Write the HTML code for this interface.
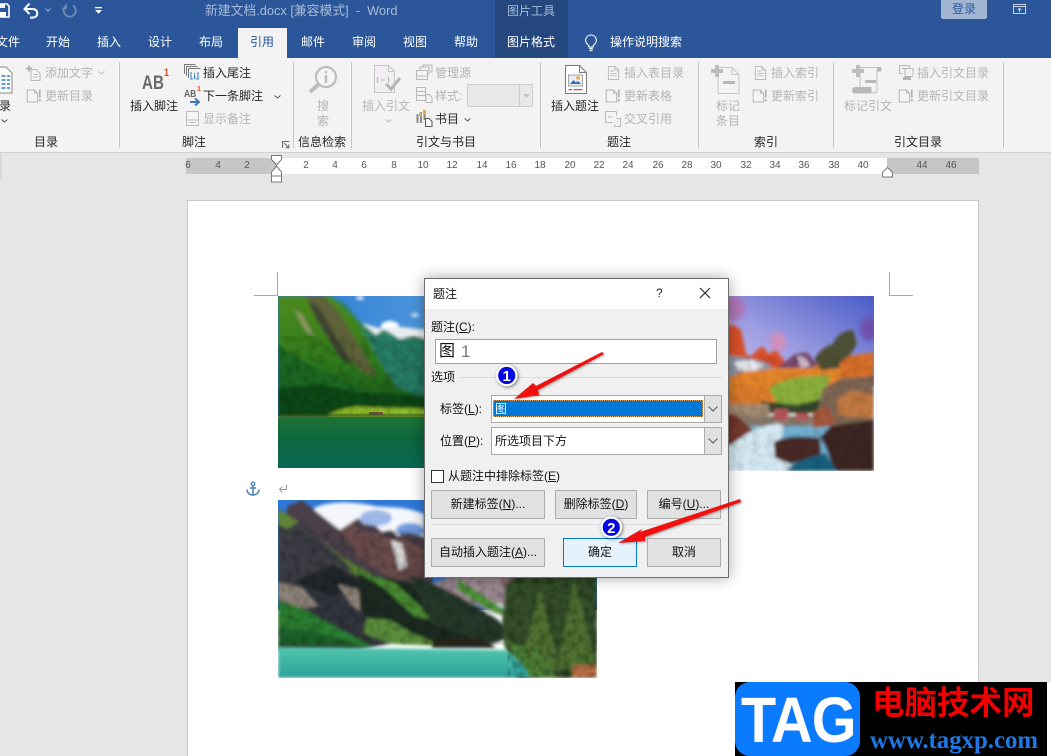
<!DOCTYPE html>
<html><head><meta charset="utf-8"><style>
html,body{margin:0;padding:0;width:1051px;height:756px;overflow:hidden;background:#e6e6e6}
body{position:relative;font-family:"Liberation Sans","Noto Sans CJK SC",sans-serif;font-size:12px;color:#262626}
.a{position:absolute}
.t{position:absolute;line-height:16px;height:16px;white-space:nowrap;font-family:"Liberation Sans","Noto Sans CJK SC",sans-serif;font-size:12px}
.c{transform:translateX(-50%)}
.g{color:#b4b4b4}
.w{color:#fff}
.sep{position:absolute;top:62px;height:86px;width:1px;background:#c6c6c6}
.r{position:absolute;top:159px;font-size:10px;line-height:14px;color:#555;transform:translateX(-50%);font-family:"Liberation Sans",sans-serif}
.btn{position:absolute;box-sizing:border-box;height:29px;background:#e1e1e1;border:1px solid #adadad;text-align:center;line-height:27px;color:#111;font-family:"Liberation Sans","Noto Sans CJK SC",sans-serif}
u{text-decoration:underline}
svg{position:absolute;overflow:visible}
</style></head><body>
<svg width="0" height="0" style="position:absolute"><defs>
<symbol id="upd" viewBox="0 0 20 18"><path d="M1.5 1.5h9l4 4v11h-13z M10.5 1.5v4h4" fill="#f5f5f5" stroke="#b4b4b4" stroke-width="1.2"/><rect x="16" y="1" width="2.4" height="10" fill="#b4b4b4"/><rect x="16" y="13" width="2.4" height="3" fill="#b4b4b4"/></symbol>
<symbol id="doc" viewBox="0 0 14 16"><path d="M1.5 1h7l4 4v10h-11z M8.5 1v4h4 M3.5 6h4 M3.5 8.5h7 M3.5 11h7" fill="#f5f5f5" stroke="#b9b9b9" stroke-width="1"/></symbol>
<filter id="soft" x="-5%" y="-5%" width="110%" height="110%"><feGaussianBlur stdDeviation="1.5"/></filter>
<filter id="soft2" x="-50%" y="-50%" width="200%" height="200%"><feGaussianBlur stdDeviation="3"/></filter>
<filter id="tex" x="0" y="0" width="100%" height="100%"><feTurbulence type="fractalNoise" baseFrequency="0.13" numOctaves="3" seed="4"/><feColorMatrix values="0 0 0 0 0 0 0 0 0 0 0 0 0 0 0 1.8 0 0 0 -0.7"/><feGaussianBlur stdDeviation="0.8"/></filter>
</defs></svg>

<!-- title bar -->
<div class="a" style="left:0;top:0;width:1051px;height:58px;background:#2b579a"></div>
<div class="a" style="left:495px;top:0;width:73px;height:58px;background:#24487e"></div>
<svg style="left:0;top:3px" width="10" height="15"><path d="M-4 1h11l2 2v11h-13z" fill="none" stroke="#fff" stroke-width="1.6"/><rect x="-1" y="1" width="6" height="4" fill="#fff"/><rect x="-1" y="9" width="7" height="5" fill="#fff"/></svg>
<svg style="left:23px;top:2px" width="18" height="16"><path d="M2 7h8a4.3 4.3 0 0 1 0 8.6H7" fill="none" stroke="#fff" stroke-width="2"/><path d="M6.5 1.5L1.5 7l5 5" fill="none" stroke="#fff" stroke-width="2"/></svg>
<svg style="left:45px;top:8px" width="6" height="4"><path d="M.5.5L3 3 5.5.5" fill="none" stroke="#9fb3d2"/></svg>
<svg style="left:62px;top:3px" width="15" height="15"><path d="M11 2.5a6 6 0 1 1-6.5 0" fill="none" stroke="#6f8cb9" stroke-width="1.8"/><path d="M4 1v4.500H0" fill="none" stroke="#6f8cb9" stroke-width="1.5"/></svg>
<svg style="left:95px;top:7px" width="7" height="7"><rect x="0" y="0" width="7" height="1.3" fill="#fff"/><path d="M0 3h7L3.5 6.8z" fill="#fff"/></svg>
<div class="t" style="left:205px;top:3px;color:#a9bbd7;font-size:12.8px;white-space:pre">新建文档.docx [兼容模式]  -  Word</div>
<div class="t c" style="left:531px;top:3px;color:#a9bbd7">图片工具</div>
<div class="a" style="left:941px;top:0;width:46px;height:19px;background:#a2b6d4;border-radius:0 0 2px 2px;color:#2b579a;text-align:center;line-height:19px;font-family:'Liberation Sans','Noto Sans CJK SC',sans-serif">登录</div>
<svg style="left:1013px;top:4px" width="13" height="11"><rect x=".5" y=".5" width="12" height="9" fill="none" stroke="#c5d2e6"/><path d="M.5 2.5h12M6.5 8V4.500M4.800 6l1.700-1.700L8.200 6" fill="none" stroke="#c5d2e6"/></svg>

<!-- tabs -->
<div class="t w" style="left:-4px;top:34px">文件</div>
<div class="t w c" style="left:58px;top:34px">开始</div>
<div class="t w c" style="left:109px;top:34px">插入</div>
<div class="t w c" style="left:160px;top:34px">设计</div>
<div class="t w c" style="left:211px;top:34px">布局</div>
<div class="a" style="left:238px;top:28px;width:49px;height:30px;background:#f3f3f3"></div>
<div class="t c" style="left:262px;top:34px;color:#2b579a">引用</div>
<div class="t w c" style="left:313px;top:34px">邮件</div>
<div class="t w c" style="left:364px;top:34px">审阅</div>
<div class="t w c" style="left:415px;top:34px">视图</div>
<div class="t w c" style="left:466px;top:34px">帮助</div>
<div class="t w c" style="left:531px;top:34px">图片格式</div>
<svg style="left:584px;top:34px" width="14" height="18"><path d="M7 1a5.3 5.3 0 0 0-3 9.700c.7.6.9 1.500.9 2.300h4.200c0-.8.2-1.700.9-2.300A5.3 5.3 0 0 0 7 1z" fill="none" stroke="#fff" stroke-width="1.1"/><path d="M5 14.500h4M5.500 16.500h3" stroke="#fff" stroke-width="1.2"/></svg>
<div class="t w" style="left:610px;top:34px">操作说明搜索</div>

<!-- ribbon -->
<div class="a" style="left:0;top:58px;width:1051px;height:94px;background:#f3f3f3;border-bottom:1px solid #d2d2d2"></div>
<div class="sep" style="left:119px"></div><div class="sep" style="left:293px"></div><div class="sep" style="left:351px"></div><div class="sep" style="left:540px"></div><div class="sep" style="left:698px"></div><div class="sep" style="left:833px"></div><div class="sep" style="left:1003px"></div>

<svg style="left:0;top:66px" width="13" height="28"><path d="M-6 1h12l6 6v20H-6z" fill="#fff" stroke="#8a8a8a"/><path d="M-4 10h14M-4 14h14M-4 18h14M-4 22h14" stroke="#2b7cd3" stroke-width="1.5" stroke-dasharray="4 1.5"/></svg>
<div class="t" style="left:-1px;top:98px">录</div>
<svg style="left:1px;top:119px" width="7" height="4"><path d="M.5.5L3.5 3 6.5.5" fill="none" stroke="#555"/></svg>
<svg style="left:26px;top:65px" width="17" height="17"><path d="M5 4.500h5l4 4v7H5z" fill="#f5f5f5" stroke="#b9b9b9"/><path d="M0 3.500h6M3 .5v6" stroke="#b4b4b4" stroke-width="2"/><path d="M7 9.500h5M7 12h5" stroke="#b9b9b9"/></svg>
<div class="t g" style="left:45px;top:65px">添加文字</div>
<svg style="left:98px;top:71px" width="7" height="4"><path d="M.5.5L3.5 3 6.5.5" fill="none" stroke="#bbb"/></svg>
<svg style="left:26px;top:88px" width="16" height="16"><use href="#upd" width="16" height="16"/></svg>
<div class="t g" style="left:45px;top:88px">更新目录</div>
<div class="t c" style="left:46px;top:134px">目录</div>

<div class="a" style="left:142px;top:72px;font:bold 19.5px/22px 'Liberation Sans',sans-serif;color:#6b6b6b;transform:scaleX(.78);transform-origin:left">AB</div>
<div class="a" style="left:164px;top:67px;font:bold 11px/12px 'Liberation Sans',sans-serif;color:#d2492a;transform:scaleX(.8);transform-origin:left">1</div>
<div class="t" style="left:130px;top:98px">插入脚注</div>
<svg style="left:184px;top:64px" width="17" height="17"><path d="M.5 10V.5h11M2.500 12V2.500h11M4.500 14V4.500h12" fill="none" stroke="#777"/><path d="M7 8v7h2M14 8v7h-2" fill="none" stroke="#2b7cd3" stroke-width="1"/><rect x="10" y="9" width="1.2" height="1.3" fill="#2b7cd3"/><rect x="10" y="11" width="1.2" height="4" fill="#2b7cd3"/></svg>
<div class="t" style="left:203px;top:65px">插入尾注</div>
<div class="a" style="left:184px;top:89px;font:bold 10px/11px 'Liberation Sans',sans-serif;color:#666;transform:scaleX(.85);transform-origin:left">AB</div>
<div class="a" style="left:197px;top:86px;font:bold 7px/8px 'Liberation Sans',sans-serif;color:#d2492a">1</div>
<svg style="left:190px;top:96px" width="11" height="10"><path d="M0 6h8M5 2.500L9 6 5 9.500" fill="none" stroke="#3e78b8" stroke-width="2"/></svg>
<div class="t" style="left:203px;top:88px">下一条脚注</div>
<svg style="left:274px;top:95px" width="7" height="4"><path d="M.5.5L3.5 3 6.5.5" fill="none" stroke="#555"/></svg>
<svg style="left:186px;top:111px" width="14" height="15"><rect x=".5" y=".5" width="12" height="14" fill="#f5f5f5" stroke="#bbb"/><path d="M.5 9h12M3 11.500h7" stroke="#bbb"/></svg>
<div class="t g" style="left:203px;top:111px">显示备注</div>
<div class="t c" style="left:194px;top:134px">脚注</div>
<svg style="left:282px;top:141px" width="8" height="8"><path d="M.5 7V.5H7.500M2 2l4.500 4.500M6.800 3.500v3.300H3.500" fill="none" stroke="#666"/></svg>

<svg style="left:308px;top:65px" width="31" height="30"><circle cx="18" cy="12" r="10" fill="#f5f5f5" stroke="#bcbcbc" stroke-width="2.2"/><path d="M10.500 19.500L2 27" stroke="#bcbcbc" stroke-width="4"/><rect x="16.800" y="6" width="2.4" height="2.4" fill="#bbb"/><rect x="16.800" y="10" width="2.4" height="8" fill="#bbb"/></svg>
<div class="t g c" style="left:323px;top:98px">搜</div>
<div class="t g c" style="left:323px;top:113px">索</div>
<div class="t c" style="left:322px;top:134px">信息检索</div>

<svg style="left:373px;top:64px" width="29" height="30"><path d="M1.500 1.500h14l6 6v21h-20z M15.500 1.500v6h6" fill="#f1eff2" stroke="#c4c4c4"/><path d="M5 13c-1 2-1 4 0 6M15 13c1 2 1 4 0 6M8 16h4" fill="none" stroke="#b0b0b0" stroke-width="1.1"/><path d="M13 20l5 5 9-11" fill="none" stroke="#b4b4b4" stroke-width="3"/></svg>
<div class="t g" style="left:362px;top:98px">插入引文</div>
<svg style="left:385px;top:119px" width="7" height="4"><path d="M.5.5L3.5 3 6.5.5" fill="none" stroke="#bbb"/></svg>
<svg style="left:416px;top:64px" width="17" height="17"><path d="M.5 15.500v-9h11v9zM.5 12h11" fill="none" stroke="#b9b9b9"/><path d="M4 6V3h9v7h-1M7 3V1h9v7h-2" fill="none" stroke="#b9b9b9"/></svg>
<div class="t g" style="left:435px;top:65px">管理源</div>
<svg style="left:416px;top:87px" width="17" height="17"><path d="M.5.5h9v13h-9zM.5 4.500h9M.5 8.500h9" fill="none" stroke="#b9b9b9"/><path d="M10 7.500h3l3 3v5h-6z" fill="#f5f5f5" stroke="#b9b9b9"/></svg>
<div class="t g" style="left:435px;top:88px">样式:</div>
<div class="a" style="left:467px;top:84px;width:66px;height:23px;box-sizing:border-box;background:#e8e8e8;border:1px solid #cfcfcf"></div>
<div class="a" style="left:519px;top:85px;width:1px;height:21px;background:#cfcfcf"></div>
<svg style="left:523px;top:94px" width="7" height="4"><path d="M0 0h7L3.500 4z" fill="#c4c4c4"/></svg>
<svg style="left:416px;top:110px" width="17" height="17"><path d="M.5 4h2v9h-2zM4 2h2v11H4zM7.500 1h2v9h-2z" fill="#888"/><rect x="7" y="0" width="3" height="4" fill="#e9a93a"/><rect x="3" y="3" width="3" height="3" fill="#e9a93a"/><path d="M9.500 8.500h3.500l3 3v5H9.500z" fill="#fff" stroke="#555"/></svg>
<div class="t" style="left:435px;top:111px">书目</div>
<svg style="left:464px;top:118px" width="7" height="4"><path d="M.5.5L3.5 3 6.5.5" fill="none" stroke="#555"/></svg>
<div class="t c" style="left:446px;top:134px">引文与书目</div>

<svg style="left:565px;top:65px" width="22" height="30"><path d="M.5.5h14l7 7v21H.5z M14.500.5v7h7" fill="#fff" stroke="#7a7a7a"/><rect x="3.5" y="10" width="14" height="11" fill="#e9eef5" stroke="#a4a4a4"/><path d="M5 19l3.500-4 2.500 2.500 2-1.500 3 3z" fill="#2b6cb8"/><circle cx="13" cy="13" r="1.7" fill="#e9a93a"/><rect x="3.5" y="24" width="3.5" height="1.2" fill="#d2492a"/><rect x="8.500" y="24" width="9" height="1.2" fill="#d2492a"/></svg>
<div class="t" style="left:551px;top:98px">插入题注</div>
<svg style="left:607px;top:65px" width="13" height="16"><use href="#doc" width="13" height="16"/></svg>
<div class="t g" style="left:624px;top:65px">插入表目录</div>
<svg style="left:605px;top:88px" width="16" height="16"><use href="#upd" width="16" height="16"/></svg>
<div class="t g" style="left:624px;top:88px">更新表格</div>
<svg style="left:605px;top:111px" width="16" height="16"><path d="M.5.5h11v4M.5.5v11h7M3 6h4M11.500 7.500h4v8h-6v-2M12 11h1" fill="none" stroke="#b9b9b9"/></svg>
<div class="t g" style="left:624px;top:111px">交叉引用</div>
<div class="t c" style="left:619px;top:134px">题注</div>

<svg style="left:711px;top:64px" width="29" height="31"><path d="M7 3.500h14l7 7v19H7z M21 3.500v7h7" fill="#f4f2f5" stroke="#c4c4c4"/><path d="M0 7h12M6 1v12" stroke="#bdbdbd" stroke-width="4"/><rect x="12" y="17" width="12" height="3" fill="#b8b8b8"/></svg>
<div class="t g" style="left:716px;top:98px">标记</div>
<div class="t g" style="left:716px;top:113px">条目</div>
<svg style="left:754px;top:65px" width="13" height="16"><use href="#doc" width="13" height="16"/></svg>
<div class="t g" style="left:771px;top:65px">插入索引</div>
<svg style="left:752px;top:88px" width="16" height="16"><use href="#upd" width="16" height="16"/></svg>
<div class="t g" style="left:771px;top:88px">更新索引</div>
<div class="t c" style="left:766px;top:134px">索引</div>

<svg style="left:852px;top:64px" width="31" height="30"><path d="M8 3.500h21v3h-4v19c0 2-1 3.500-3 3.500H3c-1.500 0-2.500-1-2.500-2.500S1.500 24 3 24h5z" fill="#f4f2f5" stroke="#c0c0c0"/><path d="M.5 27c0-3 1-4 3-4h16v6H3c-1.500 0-2.500-1-2.500-2z" fill="#b8b8b8"/><path d="M25 3.500h4v4h-4z" fill="#b8b8b8"/><path d="M0 7h12M6 1v12" stroke="#bdbdbd" stroke-width="4"/><rect x="13" y="16" width="11" height="3" fill="#b8b8b8"/></svg>
<div class="t g" style="left:844px;top:98px">标记引文</div>
<svg style="left:899px;top:65px" width="15" height="16"><path d="M.5.5h10v3M.5.5v8h3M3 3.500h11v7M6 3.500v8h8" fill="none" stroke="#b4b4b4"/><rect x="4" y="12" width="8" height="3" fill="#b4b4b4"/></svg>
<div class="t g" style="left:917px;top:65px">插入引文目录</div>
<svg style="left:898px;top:88px" width="16" height="16"><use href="#upd" width="16" height="16"/></svg>
<div class="t g" style="left:917px;top:88px">更新引文目录</div>
<div class="t c" style="left:918px;top:134px">引文目录</div>

<!-- ruler -->
<div class="a" style="left:0;top:153px;width:2px;height:27px;background:#d8d8d8"></div>
<div class="a" style="left:186px;top:158px;width:793px;height:16px;background:#c6c6c6"></div>
<div class="a" style="left:277px;top:158px;width:610px;height:16px;background:#fff"></div>
<div class="r" style="left:188px">6</div><div class="r" style="left:218px">4</div><div class="r" style="left:247px">2</div>
<div class="r" style="left:306px">2</div><div class="r" style="left:335px">4</div><div class="r" style="left:364px">6</div><div class="r" style="left:394px">8</div><div class="r" style="left:423px">10</div><div class="r" style="left:452px">12</div><div class="r" style="left:482px">14</div><div class="r" style="left:511px">16</div><div class="r" style="left:540px">18</div><div class="r" style="left:570px">20</div><div class="r" style="left:599px">22</div><div class="r" style="left:628px">24</div><div class="r" style="left:658px">26</div><div class="r" style="left:687px">28</div><div class="r" style="left:716px">30</div><div class="r" style="left:746px">32</div><div class="r" style="left:775px">34</div><div class="r" style="left:804px">36</div><div class="r" style="left:834px">38</div><div class="r" style="left:863px">40</div><div class="r" style="left:922px">44</div><div class="r" style="left:951px">46</div>
<svg style="left:271px;top:155px" width="12" height="28"><path d="M.5.5h10v4L5.500 10 .5 4.500z" fill="#fff" stroke="#777"/><path d="M5.500 11l5 6v4H.5v-4z" fill="#fff" stroke="#777"/><path d="M.5 21h10v6H.5z" fill="#fff" stroke="#777"/></svg>
<svg style="left:882px;top:167px" width="12" height="11"><path d="M5.500.5l5 5v4.500H.5V5.500z" fill="#fff" stroke="#777"/></svg>

<!-- page -->
<div class="a" style="left:187px;top:200px;width:792px;height:570px;box-sizing:border-box;background:#fff;border:1px solid #c8c8c8"></div>
<div class="a" style="left:277px;top:272px;width:1px;height:24px;background:#a8a8a8"></div>
<div class="a" style="left:254px;top:295px;width:24px;height:1px;background:#a8a8a8"></div>
<div class="a" style="left:889px;top:272px;width:1px;height:24px;background:#a8a8a8"></div>
<div class="a" style="left:889px;top:295px;width:24px;height:1px;background:#a8a8a8"></div>

<!-- image 1 -->
<svg style="left:278px;top:296px;overflow:hidden" width="150" height="172" viewBox="0 0 150 172">
<defs><linearGradient id="w1" x1="0" y1="0" x2="0" y2="1"><stop offset="0" stop-color="#1f7434"/><stop offset=".4" stop-color="#0d673e"/><stop offset="1" stop-color="#0a6853"/></linearGradient>
<linearGradient id="m1" x1="0" y1="0" x2="0" y2="1"><stop offset="0" stop-color="#4e8a1e"/><stop offset=".55" stop-color="#2f7a1d"/><stop offset="1" stop-color="#124d1b"/></linearGradient>
<linearGradient id="s1" x1="0" y1="0" x2="1" y2="0"><stop offset="0" stop-color="#2a78d2"/><stop offset="1" stop-color="#4d96dc"/></linearGradient></defs>
<rect width="150" height="120" fill="url(#s1)"/>
<g filter="url(#soft)">
<ellipse cx="112" cy="30" rx="9" ry="5" fill="#fff"/><ellipse cx="137" cy="19" rx="4" ry="2" fill="#cfe2f5"/><ellipse cx="82" cy="2" rx="4" ry="2" fill="#e6f0fa"/>
<path d="M50 0L68 8 80 24 96 34 150 38V112H110z" fill="#2c8160"/>
<path d="M84 27l14 12 8-6 16 10 12-3 16 3v-9L124 31 100 32z" fill="#e8eef0"/>
<path d="M90 40l24 50 36 14V46z" fill="#227a68" opacity=".7"/>
<path d="M0 0H52L79 24 102 67 119 91 146 102 150 104V122H0z" fill="url(#m1)"/>
<path d="M26 0H46L62 18 88 60 98 80 84 76 66 56 44 26z" fill="#5d6238"/>
<path d="M30 6l10 4 26 44 10 16-14-8-22-36z" fill="#3f4230"/>
<path d="M16 14l8 4 12 22-8-4z" fill="#8d9462"/>
<path d="M0 50C30 68 60 84 90 95L150 100V122H0z" fill="#1d6820"/>
<path d="M0 92L40 88 80 96 150 100V120H0z" fill="#0f4718"/>
<path d="M52 118c12-5 22-8 32-7l66 2v10H50z" fill="#8fc02b"/>
</g>
<rect x="91" y="116" width="14" height="3" fill="#74553a"/>
<rect x="0" y="118" width="150" height="3" fill="#2f5520" filter="url(#soft)"/>
<rect y="121" width="150" height="51" fill="url(#w1)"/>
<rect y="40" width="150" height="78" filter="url(#tex)" opacity=".25"/>
</svg>

<!-- image 2 -->
<svg style="left:715px;top:296px;overflow:hidden" width="159" height="175" viewBox="-14 0 159 175">
<defs><linearGradient id="s2" x1="1" y1="0" x2="0" y2="1"><stop offset="0" stop-color="#4a5cc6"/><stop offset=".55" stop-color="#9c9de2"/><stop offset="1" stop-color="#d5c8ec"/></linearGradient></defs>
<rect x="-14" width="159" height="90" fill="url(#s2)"/>
<ellipse cx="4" cy="12" rx="12" ry="13" fill="#b86aa8" opacity=".75" filter="url(#soft2)"/>
<ellipse cx="49" cy="46" rx="8" ry="10" fill="#e08ab4" opacity=".8" filter="url(#soft2)"/>
<ellipse cx="140" cy="33" rx="9" ry="12" fill="#6f49a5" opacity=".85" filter="url(#soft2)"/>
<g filter="url(#soft)">
<path d="M-14 64V30L5 29 12 34 17 58 22 60 33 50 40 58 47 54 56 66 50 72H-14z" fill="#d8502c"/>
<path d="M-14 60l20 0 14 2 16 4 14 10-20 10H-14z" fill="#8e95a6"/>
<path d="M5 66l18-2 12 6-10 6-16-2z" fill="#e7e9ee"/>
<path d="M48 72l18-14 12-2 12 14-30 8z" fill="#7a4a70"/>
<path d="M68 60l8 2 6 8-10 2z" fill="#d4bcd0"/>
<path d="M-14 88L12 76 50 72 82 72 105 62 145 58V84L110 92 60 112H-14z" fill="#e4852a"/>
<path d="M86 64c2-8 10-14 18-16 2-8 12-14 20-14l4 14-6 10-8 14-22 2z" fill="#4e5034"/>
<path d="M110 68l10-8 25-4v26l-30 8z" fill="#d96f2c"/>
<path d="M40 92c14-10 40-14 62-12l-10 22-18 14-24-4z" fill="#8bb03c"/>
<path d="M-14 96l24-8 28 4 8 20-60 0z" fill="#db7c2a"/>
<path d="M32 105l36 4 24-6-4 14H32z" fill="#33472c"/>
<path d="M-14 108h54v14H-14z" fill="#a48a70"/>
<path d="M-14 120h108v14H-14z" fill="#8a7a6c"/>
<path d="M-14 130h145v45H-14z" fill="#6fb0d0"/>
<path d="M94 92l20-10 31-2v52l-36 2-22-12z" fill="#7e6652"/>
<path d="M108 104l14-10 23 4v24l-36-2z" fill="#c07842"/>
<path d="M45 113h14v11H45zM67 117h12v7H67z" fill="#b5525a"/>
<path d="M84 116l14-6 8 14-4 6-18 2z" fill="#a5583e"/>
<path d="M-14 118h8l12 0 18 16-6 14-8 2h-24z" fill="#74382e"/>
<path d="M0 150c20-14 30-20 44-22 16-2 10 10 6 18-8 14 6 18 20 29H-14v-25z" fill="#d4e8f2"/>
<path d="M45 146c10-6 30-6 46-4l1 18-30 8-16-6z" fill="#4a2a28"/>
<path d="M102 130l43-6v51h-40l-8-24-6-10z" fill="#3e2524"/>
<path d="M70 165l26-8 12 18H56z" fill="#12607e"/>
</g>
<rect x="-14" y="60" width="159" height="115" filter="url(#tex)" opacity=".15"/>
</svg>

<!-- image 3 -->
<svg style="left:278px;top:500px;overflow:hidden" width="319" height="178" viewBox="0 0 319 178">
<defs><linearGradient id="w3" x1="0" y1="0" x2="0" y2="1"><stop offset="0" stop-color="#50c6ae"/><stop offset="1" stop-color="#2d9f9a"/></linearGradient></defs>
<rect width="319" height="110" fill="#2f78d8"/>
<g filter="url(#soft)">
<path d="M36 8c16-8 44-6 60-2 18 2 30 0 50 8v40H60z" fill="#f4f6fb"/>
<ellipse cx="98" cy="18" rx="16" ry="8" fill="#9db6e8"/>
<ellipse cx="132" cy="30" rx="14" ry="7" fill="#6f9be0"/>
<path d="M150 86l50-22 36-8 30 4 20 30-60 26z" fill="#9b8a92"/>
<path d="M215 66l22-8 12 4 10 22-24 22z" fill="#8c6a70"/>
<path d="M209 104h16v9h-16z" fill="#e9eef4"/>
<path d="M10 6l14-6 20 16 18 14 12-8 6-4 6 6 12 2 6 6 10-2 6 6 10-4 14 4 14 10-4 40-40 14-60-20L0 40z" fill="#4b3f48"/>
<path d="M62 32l12-10 8 10 22 2 10 6 8-2 10 4 15 8-2 26-30 4-30-20z" fill="#6a4c4c"/>
<path d="M113 40l5 18 3 12 8-4-5-22z" fill="#ddd"/>
<path d="M0 8L29 29 62 59 95 76 130 98 180 130 80 150H0z" fill="#33353d"/>
<path d="M0 9L14 18 40 36 62 56 95 75 92 82 60 66 30 42 0 24z" fill="#5f8436"/>
<path d="M0 34l24-14 36 36 14 14-30 20-24-6-20 10z" fill="#3e3e44"/>
<path d="M15 82l40-18 30 20-30 12z" fill="#23252a"/>
<path d="M0 82l24 6 16 18-14 2L0 102z" fill="#8c8278"/>
<path d="M60 84l20 6 10 26-16-10z" fill="#8f8478"/>
<path d="M0 100l24 8 36 20 34 18H0z" fill="#2a7e32"/>
<path d="M0 128l40 4 40 14H0z" fill="#1f5f2c"/>
<path d="M80 72l50 10 46 30 56 26-60 10-60-8-30-30z" fill="#1b2a21"/>
<path d="M76 70l40 12 26 24 12 14-18-4-30-28z" fill="#4a8a30"/>
<path d="M88 118l24 2 24 14 30 12-50-2-30-10z" fill="#5a8e3a"/>
<path d="M130 74c30 10 60 26 90 46l14 16-20 8-60-20z" fill="#26382a"/>
<path d="M178 78l40 26 22 14-26-6-34-22z" fill="#4f9438"/>
<path d="M154 138h50l14 10h-64z" fill="#25271e"/>
<path d="M228 84c8-8 20-12 32-14h59v108H240c-6-10-10-22-14-34l-2-24z" fill="#36502a"/>
<path d="M262 90l20 80h-40zM296 80l23 90h-40z" fill="#4f7230"/>
<path d="M228 140l30 10 20 28h-30z" fill="#4b7d34"/>
<path d="M295 165h24v13h-24z" fill="#b56d45"/>
</g>
<path d="M0 147L228 150c8 6 20 14 24 28H0z" fill="url(#w3)" filter="url(#soft)"/>
<rect y="30" width="228" height="115" filter="url(#tex)" opacity=".28"/>
<rect x="229" y="70" width="90" height="108" filter="url(#tex)" opacity=".4"/>
</svg>

<!-- anchor & return -->
<svg style="left:246px;top:481px" width="14" height="16"><circle cx="7" cy="2.8" r="1.8" fill="none" stroke="#4a7eb8" stroke-width="1.3"/><path d="M7 4.500V14M4 7h6M1 8.500c0 3.500 3 5.500 6 5.500s6-2 6-5.500" fill="none" stroke="#4a7eb8" stroke-width="1.5"/></svg>
<svg style="left:278px;top:484px" width="10" height="10"><path d="M8.500.5v5H1.500M4.500 2.500l-3 3 3 3" fill="none" stroke="#9a9a9a"/></svg>

<!-- dialog -->
<div class="a" style="left:424px;top:278px;width:305px;height:300px;box-sizing:border-box;background:#f0f0f0;border:1px solid #6e6e6e;box-shadow:0 0 14px rgba(0,0,0,.35)"></div>
<div class="a" style="left:425px;top:279px;width:303px;height:30px;background:#fff"></div>
<div class="t" style="left:433px;top:286px;color:#111">题注</div>
<div class="t" style="left:656px;top:285px;color:#222">?</div>
<svg style="left:699px;top:287px" width="12" height="12"><path d="M1 1l10 10M11 1L1 11" stroke="#222" stroke-width="1.1"/></svg>
<div class="t" style="left:431px;top:319px;color:#111">题注(<u>C</u>):</div>
<div class="a" style="left:435px;top:339px;width:282px;height:25px;box-sizing:border-box;background:#fff;border:1px solid #a0a0a0"></div>
<div class="t" style="left:439px;top:343px;font-size:16px;line-height:18px;height:18px;color:#111">图</div>
<div class="t" style="left:461px;top:343px;font-size:17px;line-height:18px;height:18px;color:#777">1</div>
<div class="t" style="left:431px;top:369px;color:#111">选项</div>
<div class="a" style="left:460px;top:377px;width:262px;height:1px;background:#dcdcdc"></div>
<div class="t" style="left:440px;top:401px;color:#111">标签(<u>L</u>):</div>
<div class="a" style="left:491px;top:395px;width:231px;height:28px;box-sizing:border-box;background:#fff;border:1px solid #a9a9a9"></div>
<div class="a" style="left:493px;top:400px;width:210px;height:17px;background:#0078d7;outline:1px dotted #e0a060;outline-offset:-1px"></div>
<div class="t w" style="left:495px;top:401px">图</div>
<div class="a" style="left:704px;top:396px;width:17px;height:26px;background:#e1e1e1;border-left:1px solid #adadad;box-sizing:border-box"></div>
<svg style="left:708px;top:406px" width="10" height="6"><path d="M.5.5L5 5 9.500.5" fill="none" stroke="#555"/></svg>
<div class="t" style="left:440px;top:433px;color:#111">位置(<u>P</u>):</div>
<div class="a" style="left:491px;top:427px;width:231px;height:28px;box-sizing:border-box;background:#fff;border:1px solid #a9a9a9"></div>
<div class="t" style="left:495px;top:433px;color:#111">所选项目下方</div>
<div class="a" style="left:704px;top:428px;width:17px;height:26px;background:#e1e1e1;border-left:1px solid #adadad;box-sizing:border-box"></div>
<svg style="left:708px;top:438px" width="10" height="6"><path d="M.5.5L5 5 9.500.5" fill="none" stroke="#555"/></svg>
<div class="a" style="left:431px;top:470px;width:13px;height:13px;box-sizing:border-box;background:#fff;border:1px solid #333"></div>
<div class="t" style="left:448px;top:468px;color:#111">从题注中排除标签(<u>E</u>)</div>
<div class="btn" style="left:431px;top:490px;width:114px">新建标签(<u>N</u>)...</div>
<div class="btn" style="left:555px;top:490px;width:82px">删除标签(<u>D</u>)</div>
<div class="btn" style="left:647px;top:490px;width:74px">编号(<u>U</u>)...</div>
<div class="a" style="left:431px;top:524px;width:291px;height:1px;background:#dcdcdc"></div>
<div class="btn" style="left:431px;top:538px;width:114px">自动插入题注(<u>A</u>)...</div>
<div class="btn" style="left:563px;top:538px;width:74px;background:#e5f1fb;border-color:#0078d7">确定</div>
<div class="btn" style="left:647px;top:538px;width:74px">取消</div>

<!-- annotations -->
<svg style="left:0;top:0" width="1051" height="756">
<path d="M514 399L533 383 536 386 602 352 604 354 538 390 539 395z" fill="#f01010" style="filter:drop-shadow(1px 1px 1px rgba(0,0,0,.35))"/>
<path d="M618 543L642 529 640 532 740 499 741 502 645 537 645 541z" fill="#f01010" style="filter:drop-shadow(1px 1px 1px rgba(0,0,0,.35))"/>
<circle cx="506.700" cy="375.500" r="9.700" fill="#0606e0" stroke="#fff" stroke-width="2.2" style="filter:drop-shadow(1px 1px 1.5px rgba(0,0,0,.5))"/>
<circle cx="611.300" cy="527.300" r="9.700" fill="#0606e0" stroke="#fff" stroke-width="2.2" style="filter:drop-shadow(1px 1px 1.5px rgba(0,0,0,.5))"/>
<text x="506.700" y="381" font-family="Liberation Sans" font-size="15" font-weight="bold" fill="#fff" text-anchor="middle">1</text>
<text x="611.300" y="533" font-family="Liberation Sans" font-size="15" font-weight="bold" fill="#fff" text-anchor="middle">2</text>
</svg>

<!-- watermark -->
<div class="a" style="left:980px;top:682px;width:71px;height:74px;background:#fff"></div>
<div class="a" style="left:735px;top:682px;width:312px;height:74px;background:#000"></div>
<div class="a" style="left:735px;top:682px;width:125px;height:74px;background:#0a7bff;border-radius:15px"></div>
<div class="a" style="left:741px;top:683px;font:bold 64px/74px 'Liberation Sans',sans-serif;color:#fff;letter-spacing:-1px;transform:scaleX(.9);transform-origin:left">TAG</div>
<div class="a" style="left:872px;top:685px;font:bold 32.5px/36px 'Liberation Sans','Noto Sans CJK SC',sans-serif;color:#f20000;white-space:nowrap">电脑技术网</div>
<div class="a" style="left:870px;top:728px;font:bold 24.8px/26px 'Liberation Serif',serif;color:#1d78e6;white-space:nowrap">www.tagxp.com</div>
</body></html>
